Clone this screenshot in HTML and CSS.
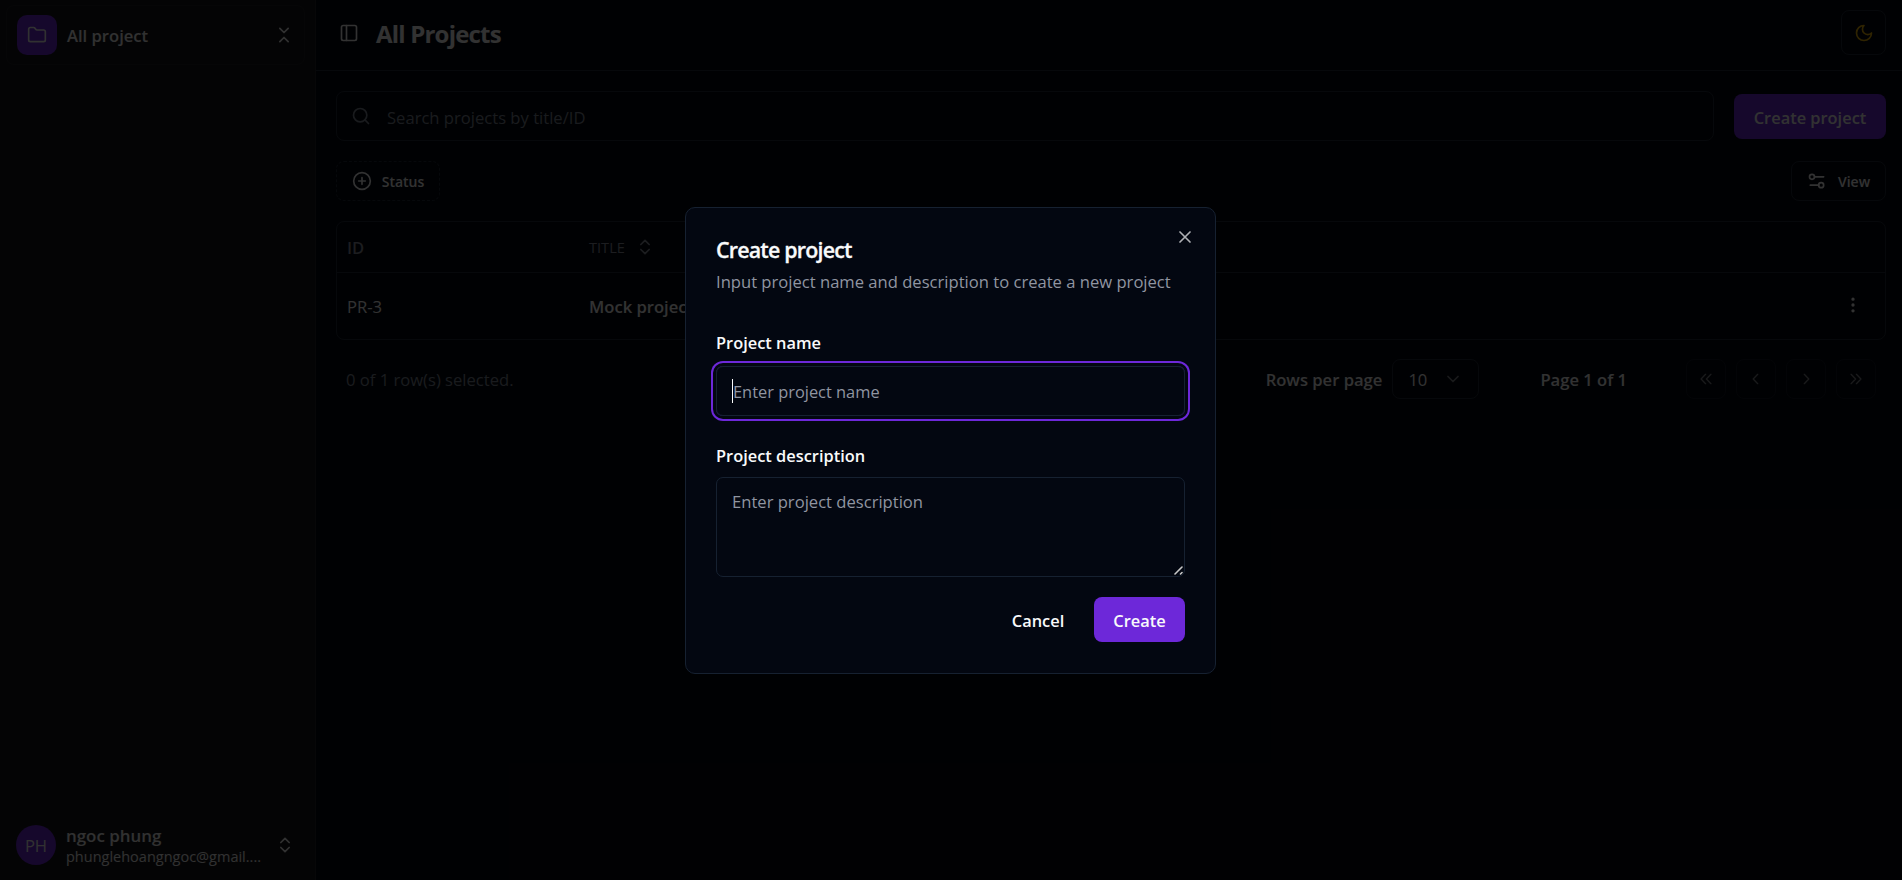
FILE: index.html
```html
<!DOCTYPE html>
<html lang="en">
<head>
<meta charset="utf-8">
<title>All Projects</title>
<link rel="stylesheet" href="styles.css">
</head>
<body>
<div class="app">
  <aside class="sidebar">
    <div class="team">
      <span class="team-logo"><svg class="icon" viewBox="0 0 24 24"><path d="M20 20a2 2 0 0 0 2-2V8a2 2 0 0 0-2-2h-7.9a2 2 0 0 1-1.69-.9L9.6 3.9A2 2 0 0 0 7.93 3H4a2 2 0 0 0-2 2v13a2 2 0 0 0 2 2Z"/></svg></span>
      <span class="team-name">All project</span>
      <svg class="icon" viewBox="0 0 24 24"><path d="m7 20 5-5 5 5"/><path d="m7 4 5 5 5-5"/></svg>
    </div>
    <div class="user">
      <span class="avatar">PH</span>
      <div class="user-info">
        <div class="user-name">ngoc phung</div>
        <div class="user-mail">phunglehoangngoc@gmail....</div>
      </div>
      <svg class="icon" viewBox="0 0 24 24"><path d="m7 15 5 5 5-5"/><path d="m7 9 5-5 5 5"/></svg>
    </div>
  </aside>
  <main class="main">
    <header class="topbar">
      <svg class="icon" viewBox="0 0 24 24"><rect width="18" height="18" x="3" y="3" rx="2"/><path d="M9 3v18"/></svg>
      <h1 class="page-title">All Projects</h1>
      <button class="box theme"><svg class="icon" viewBox="0 0 24 24"><path d="M12 3a6 6 0 0 0 9 9 9 9 0 1 1-9-9Z"/></svg></button>
    </header>
    <section class="content">
      <div class="row">
        <div class="search box"><svg class="icon" viewBox="0 0 24 24"><circle cx="11" cy="11" r="8"/><path d="m21 21-4.3-4.3"/></svg><span>Search projects by title/ID</span></div>
        <button class="primary new">Create project</button>
      </div>
      <div class="row filters">
        <button class="box status"><svg class="icon" viewBox="0 0 24 24"><circle cx="12" cy="12" r="10"/><path d="M8 12h8M12 8v8"/></svg><span>Status</span></button>
        <button class="box view"><svg class="icon" viewBox="0 0 24 24"><path d="M20 7H9M14 17H4"/><circle cx="17" cy="17" r="3"/><circle cx="6" cy="7" r="3"/></svg><span>View</span></button>
      </div>
      <div class="table box">
        <div class="tr head"><span class="c-id">ID</span><span class="c-title"><span>TITLE</span><svg class="icon" viewBox="0 0 24 24"><path d="m7 15 5 5 5-5"/><path d="m7 9 5-5 5 5"/></svg></span></div>
        <div class="tr body"><span class="c-id">PR-3</span><span class="c-title strong">Mock project</span><svg class="dots" viewBox="0 0 24 24"><circle cx="12" cy="12" r="1"/><circle cx="12" cy="5" r="1"/><circle cx="12" cy="19" r="1"/></svg></div>
      </div>
      <div class="pager">
        <span class="selected">0 of 1 row(s) selected.</span>
        <span class="rows">Rows per page</span>
        <span class="box select"><span>10</span><svg class="icon" viewBox="0 0 24 24"><path d="m6 9 6 6 6-6"/></svg></span>
        <span class="page">Page 1 of 1</span>
        <div class="nav">
          <button class="box"><svg class="icon" viewBox="0 0 15 15"><path d="M7.2 4 3.8 7.5l3.4 3.5M11.2 4 7.8 7.5l3.4 3.5"/></svg></button>
          <button class="box"><svg class="icon" viewBox="0 0 15 15"><path d="M8.8 4 5.4 7.5l3.4 3.5"/></svg></button>
          <button class="box"><svg class="icon" viewBox="0 0 15 15"><path d="M6.2 4l3.4 3.5L6.2 11"/></svg></button>
          <button class="box"><svg class="icon" viewBox="0 0 15 15"><path d="M3.8 4l3.4 3.5L3.8 11M7.8 4l3.4 3.5L7.8 11"/></svg></button>
        </div>
      </div>
    </section>
  </main>
</div>
<div class="overlay">
  <div class="dialog" role="dialog">
    <svg class="close" viewBox="0 0 24 24"><path d="M18 6 6 18M6 6l12 12"/></svg>
    <h2 class="dialog-title">Create project</h2>
    <p class="dialog-sub">Input project name and description to create a new project</p>
    <div class="label first">Project name</div>
    <div class="input"><i class="caret"></i><span>Enter project name</span></div>
    <div class="label second">Project description</div>
    <div class="textarea">Enter project description<svg class="grip" viewBox="0 0 9 9"><path d="M1 8 8 1M6.500 8 8 6.500"/></svg></div>
    <div class="actions">
      <button class="ghost">Cancel</button>
      <button class="primary create">Create</button>
    </div>
  </div>
</div>
</body>
</html>
```
FILE: styles.css
```css
* { box-sizing: border-box; }
body { margin: 0; background: #030711; color: #f9fafb; font: 16.6px/25px "Open Sans", "Noto Sans", sans-serif; overflow: hidden; }
h1, h2, p { margin: 0; font-weight: 600; }
p { font-weight: 400; }
button { font: inherit; color: inherit; background: none; border: 0; padding: 0; display: flex; align-items: center; justify-content: center; }
svg { fill: none; stroke: currentColor; stroke-width: 2; stroke-linecap: round; stroke-linejoin: round; flex: none; }
span { white-space: nowrap; }
.icon { width: 20px; height: 20px; }
.box { border: 1px solid #1f2937; border-radius: 8px; }
.app { display: flex; height: 880px; }
.sidebar { width: 316px; background: #18181b; border-right: 1px solid #27272a; display: flex; flex-direction: column; justify-content: space-between; padding: 5px 10px 5px 6px; color: #f4f4f5; }
.team, .user { display: flex; align-items: center; height: 60px; padding: 0 10px; border: 1px solid transparent; border-radius: 8px; }
.user { padding-left: 9px; padding-right: 9px; }
.team { border-color: #1f1f25; }
.team-logo, .avatar { width: 40px; height: 40px; background: #6d28d9; border-radius: 10px; display: flex; align-items: center; justify-content: center; }
.avatar { border-radius: 50%; padding-top: 1px; }
.team-name { flex: 1; margin-left: 10px; font-weight: 600; }
.user-info { flex: 1; margin-left: 10px; }
.user-name { font-weight: 600; line-height: 22px; font-size: 16.9px; }
.user-mail { font-size: 14.5px; line-height: 19px; }
.main { flex: 1; }
.topbar { height: 71px; border-bottom: 1px solid #1f2937; display: flex; align-items: center; padding: 0 16px 5px 23px; }
.page-title { flex: 1; margin-left: 17px; padding-top: 2px; font-size: 24px; font-weight: 700; letter-spacing: -.8px; }
.theme { width: 45px; height: 45px; color: #eab308; }
.content { padding: 20px 16px 0 20px; }
.row { display: flex; align-items: center; justify-content: space-between; gap: 20px; }
.search { flex: 1; height: 50px; display: flex; align-items: center; gap: 16px; padding-left: 14px; color: #7f8794; }
.search span { padding-top: 2px; }
.primary { background: #6d28d9; border-radius: 8px; font-weight: 600; }
.new { width: 152px; height: 45px; padding-top: 2px; font-size: 16.4px; }
.filters { margin-top: 20px; }
.filters button { height: 40px; font-size: 14px; font-weight: 600; }
.status { width: 104px; gap: 10px; border-style: dashed; }
.view { width: 95px; gap: 11px; }
.table { margin-top: 20px; height: 119px; }
.tr { display: flex; align-items: center; padding-left: 10px; }
.head { height: 51px; border-bottom: 1px solid #1f2937; color: #8a919e; }
.body { height: 66px; }
.c-id { width: 242px; }
.head .c-id { font-weight: 600; }
.c-title { flex: 1; display: flex; align-items: center; gap: 10px; font-size: 14.6px; }
.strong { font-weight: 600; font-size: 16.6px; }
.dots { width: 20px; height: 20px; margin: 0 22px 2px 0; }
.pager { display: flex; align-items: center; margin-top: 19px; padding: 0 10px; height: 40px; }
.selected { flex: 1; color: #7f8794; }
.rows, .page { font-weight: 600; }
.select { width: 87px; height: 40px; display: flex; align-items: center; justify-content: space-between; padding: 0 15px; margin-left: 10px; }
.select svg { opacity: .5; }
.page { margin-left: 61px; }
.nav { display: flex; gap: 10px; margin-left: 59px; }
.nav button { width: 40px; height: 40px; opacity: .5; }
.nav svg { stroke-width: 1; }
.overlay { position: absolute; inset: 0; background: rgba(0,0,0,.8); display: flex; align-items: center; justify-content: center; }
.dialog { position: relative; width: 531px; height: 467px; margin: 1px 1px 0 0; background: #030711; border: 1px solid #162131; border-radius: 10px; padding: 29px 30px; }
.close { position: absolute; right: 20px; top: 19px; width: 20px; height: 20px; opacity: .7; }
.dialog-title { font-size: 21.4px; line-height: 25px; letter-spacing: -.8px; -webkit-text-stroke: .3px currentColor; }
.dialog-sub { margin-top: 7px; color: #9095a1; white-space: nowrap; }
.label { font-weight: 600; line-height: 18px; font-size: 16.4px; }
.first { margin-top: 40px; }
.second { margin-top: 31px; }
.input { margin-top: 14px; height: 50px; border: 1px solid #162131; border-radius: 7px; box-shadow: 0 0 0 3px #030711, 0 0 0 5px #6d28d9; display: flex; align-items: center; padding-left: 15px; color: #9095a1; font-size: 16.4px; }
.input span { padding-top: 1px; }
.caret { width: 1px; height: 24px; background: #f9fafb; }
.textarea { position: relative; margin-top: 12px; height: 100px; border: 1px solid #162131; border-radius: 7px; padding: 11px 15px; color: #9095a1; }
.grip { position: absolute; right: 1px; bottom: 1px; width: 9px; height: 9px; color: #c8c8c8; stroke-width: 1.6; }
.actions { display: flex; justify-content: flex-end; margin-top: 20px; }
.actions button { height: 45px; padding-top: 2px; font-weight: 600; font-size: 16.4px; }
.ghost { width: 92px; margin-right: 10px; }
.create { width: 91px; }
```
